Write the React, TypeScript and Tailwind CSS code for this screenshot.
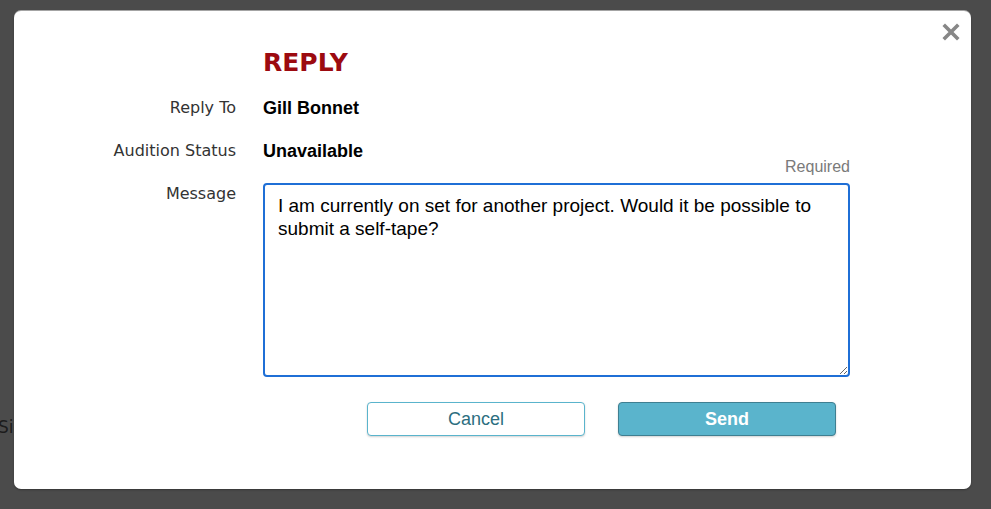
import React from 'react';

const CloseIcon: React.FC = () => (
  <svg width="18" height="18" viewBox="0 0 18 18" aria-hidden="true">
    <path d="M3 3 L15 15 M15 3 L3 15" stroke="#878787" strokeWidth="3.6" strokeLinecap="square" />
  </svg>
);

const App: React.FC = () => {
  const labelCls = "text-right text-[16px] leading-[24px] text-[#333333] font-['DejaVu_Sans',sans-serif]";
  const valueCls = "text-[18px] leading-[24px] font-bold text-black font-['Liberation_Sans',Arial,sans-serif]";

  return (
    <div className="relative w-full h-[509px] bg-[#4b4b4b] overflow-hidden pt-[11px] pl-[14px]">
      {/* page behind the overlay */}
      <div className="absolute left-[-2px] top-[415px] text-[17px] text-[#1c1c1c] font-['DejaVu_Sans',sans-serif]">
        Sign
      </div>

      <div className="relative w-[957px] h-[478px] bg-white rounded-[7px] shadow-[0_-1px_0_rgba(255,255,255,0.5),0_1px_2px_rgba(0,0,0,0.3)] pt-[36px]">
        <button className="absolute right-[11px] top-[12px] p-0" aria-label="Close">
          <CloseIcon />
        </button>

        <div className="grid grid-cols-[222px_587px] gap-x-[27px]">
          <div />
          <div className="text-[25px] leading-[32px] font-bold text-[#9c0a10] font-['DejaVu_Sans',sans-serif]">
            REPLY
          </div>

          <div className={`${labelCls} mt-[17px]`}>Reply To</div>
          <div className={`${valueCls} mt-[17px]`}>Gill Bonnet</div>

          <div className={`${labelCls} mt-[19px]`}>Audition Status</div>
          <div className={`${valueCls} mt-[19px]`}>Unavailable</div>

          <div className={`${labelCls} mt-[19px]`}>Message</div>
          <div className="-mt-[5px]">
            <div className="text-right text-[16px] leading-[18px] text-[#7a7a7a] font-['Liberation_Sans',Arial,sans-serif]">
              Required
            </div>
            <textarea
              className="mt-[7px] block w-[587px] h-[194px] border-2 border-[#1f6fd6] rounded-[4px] px-[13px] py-[9px] text-[19px] leading-[23px] text-black font-['Liberation_Sans',Arial,sans-serif] outline-none"
              defaultValue="I am currently on set for another project. Would it be possible to submit a self-tape?"
            />
          </div>

          <div />
          <div className="flex gap-[33px] mt-[25px] ml-[104px]">
            <button className="w-[218px] h-[34px] bg-white border border-[#5ab4cc] rounded-[4px] shadow-[0_1px_2px_rgba(0,0,0,0.18)] text-[18px] text-[#2c6e80] font-['Liberation_Sans',Arial,sans-serif]">
              Cancel
            </button>
            <button className="w-[218px] h-[34px] bg-[#5ab4cc] border border-[#3f7f91] rounded-[4px] shadow-[0_1px_2px_rgba(0,0,0,0.18)] text-[18px] font-bold text-white font-['Liberation_Sans',Arial,sans-serif]">
              Send
            </button>
          </div>
        </div>
      </div>
    </div>
  );
};

export default App;
